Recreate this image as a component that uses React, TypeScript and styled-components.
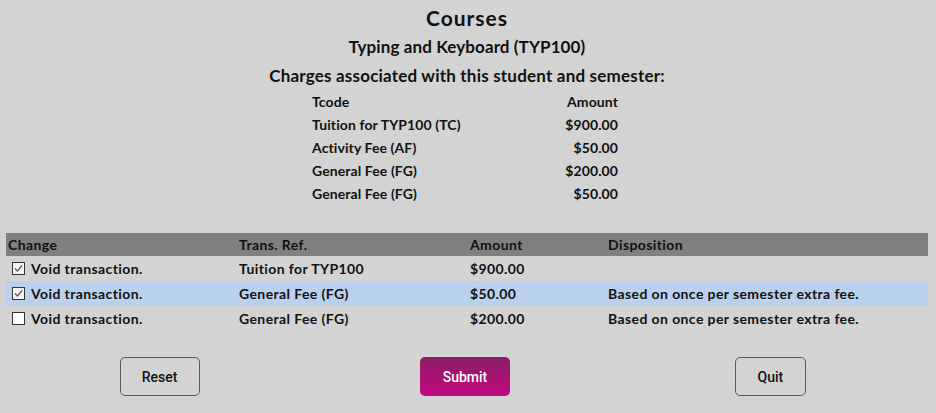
import React from "react";
import styled, { createGlobalStyle } from "styled-components";

const Global = createGlobalStyle`
  html, body { margin: 0; padding: 0; background: #d3d3d3; }
  body { font-family: "Lato", "DejaVu Sans", sans-serif; color: #111; }
`;

const Page = styled.div`
  width: 936px;
  height: 413px;
  box-sizing: border-box;
  padding: 6px 8px 0 6px;
  display: flex;
  flex-direction: column;
  align-items: stretch;
  background: #d3d3d3;
  font-weight: 700;
`;

const Title = styled.h1`
  margin: 0;
  text-align: center;
  font-size: 21px;
  letter-spacing: 1px;
  line-height: 24px;
  font-weight: 700;
`;

const SubTitle = styled.h2<{ $top: number; $ls: number }>`
  margin: ${(p) => p.$top}px 0 0;
  text-align: center;
  font-size: 17px;
  letter-spacing: ${(p) => p.$ls}px;
  line-height: 20px;
  font-weight: 700;
`;

const ChargeGrid = styled.div`
  align-self: center;
  margin-top: 4px;
  width: 306px;
  display: grid;
  grid-template-columns: 1fr auto;
  grid-auto-rows: 23px;
  align-items: center;
  font-size: 14px;
  letter-spacing: 0.1px;
  margin-left: -4px;
`;

const ChargeCell = styled.div<{ $right?: boolean }>`
  text-align: ${(p) => (p.$right ? "right" : "left")};
`;

const Table = styled.div`
  margin-top: 28px;
  display: grid;
  grid-template-columns: 231px 231px 138px 1fr;
  font-size: 14px;
  letter-spacing: 0.4px;
`;

const Row = styled.div<{ $variant?: "head" | "sel" | "plain" }>`
  display: contents;
  & > div {
    height: ${(p) => (p.$variant === "head" ? "23px" : "25px")};
    background: ${(p) =>
      p.$variant === "head" ? "#808080" : p.$variant === "sel" ? "#bad1ee" : "transparent"};
  }
`;

const Cell = styled.div`
  display: flex;
  align-items: center;
  gap: 6px;
  padding-left: 2px;
  white-space: nowrap;
`;

const Box = styled.span<{ $checked: boolean }>`
  width: 11px;
  height: 11px;
  margin-left: 4px;
  border: 1px solid #333;
  background: ${(p) => (p.$checked ? "#f4f4f4" : "#fff")};
  display: inline-flex;
  align-items: center;
  justify-content: center;
  flex: none;
`;

const Buttons = styled.div`
  margin-top: 26px;
  display: grid;
  grid-template-columns: 1fr 1fr 1fr;
  justify-items: center;
`;

const Btn = styled.button<{ $primary?: boolean; $w: number; $shift: number }>`
  width: ${(p) => p.$w}px;
  height: 39px;
  border-radius: 5px;
  font-family: Roboto, "Liberation Sans", sans-serif;
  font-size: 14px;
  font-weight: 500;
  cursor: pointer;
  position: relative;
  left: ${(p) => p.$shift}px;
  color: ${(p) => (p.$primary ? "#fff" : "#111")};
  border: ${(p) => (p.$primary ? "none" : "1px solid #5a5a5a")};
  background: ${(p) =>
    p.$primary ? "linear-gradient(#8a1f66, #c3077f)" : "transparent"};
`;

const Check = () => (
  <svg width="9" height="9" viewBox="0 0 9 9">
    <path d="M1 4.5 L3.5 7 L8 1.5" fill="none" stroke="#555" strokeWidth="1.2" />
  </svg>
);

const charges = [
  ["Tuition for TYP100 (TC)", "$900.00"],
  ["Activity Fee (AF)", "$50.00"],
  ["General Fee (FG)", "$200.00"],
  ["General Fee (FG)", "$50.00"],
];

const rows = [
  { checked: true, ref: "Tuition for TYP100", amt: "$900.00", disp: "", sel: false },
  { checked: true, ref: "General Fee (FG)", amt: "$50.00", disp: "Based on once per semester extra fee.", sel: true },
  { checked: false, ref: "General Fee (FG)", amt: "$200.00", disp: "Based on once per semester extra fee.", sel: false },
];

export default function App() {
  return (
    <Page>
      <Global />
      <Title>Courses</Title>
      <SubTitle $top={7} $ls={0.1}>Typing and Keyboard (TYP100)</SubTitle>
      <SubTitle $top={9} $ls={0.2}>Charges associated with this student and semester:</SubTitle>
      <ChargeGrid>
        <ChargeCell>Tcode</ChargeCell>
        <ChargeCell $right>Amount</ChargeCell>
        {charges.map(([c, a], i) => (
          <React.Fragment key={i}>
            <ChargeCell>{c}</ChargeCell>
            <ChargeCell $right>{a}</ChargeCell>
          </React.Fragment>
        ))}
      </ChargeGrid>
      <Table>
        <Row $variant="head">
          <Cell>Change</Cell>
          <Cell>Trans. Ref.</Cell>
          <Cell>Amount</Cell>
          <Cell>Disposition</Cell>
        </Row>
        {rows.map((r, i) => (
          <Row key={i} $variant={r.sel ? "sel" : "plain"}>
            <Cell>
              <Box $checked={r.checked}>{r.checked && <Check />}</Box>
              Void transaction.
            </Cell>
            <Cell>{r.ref}</Cell>
            <Cell>{r.amt}</Cell>
            <Cell>{r.disp}</Cell>
          </Row>
        ))}
      </Table>
      <Buttons>
        <Btn $w={80} $shift={0}>Reset</Btn>
        <Btn $primary $w={90} $shift={-2}>Submit</Btn>
        <Btn $w={71} $shift={-4}>Quit</Btn>
      </Buttons>
    </Page>
  );
}
